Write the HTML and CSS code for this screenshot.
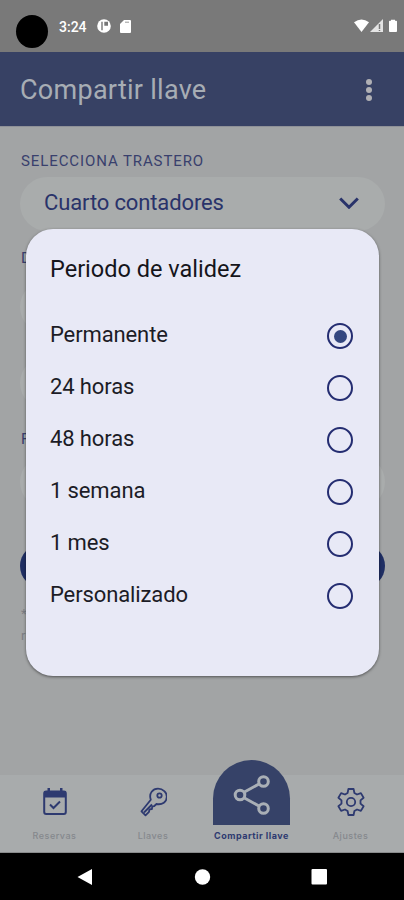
FILE: index.html
```html
<!DOCTYPE html>
<html lang="es">
<head>
<meta charset="utf-8">
<title>Compartir llave</title>
<link rel="stylesheet" href="styles.css">
</head>
<body>
<div class="phone">
  <div class="status">
    <span class="camera"></span>
    <span class="clock">3:24</span>
    <svg class="st-app" viewBox="0 0 14 14"><circle cx="7" cy="7" r="6.8" fill="#fff"/><path d="M5 2.8v8.5M8 3.500h2.300v2.500H8z" stroke="#777" stroke-width="1.400" fill="#777"/></svg>
    <svg class="st-sd" viewBox="0 0 11 13"><path d="M4 0h6a1 1 0 0 1 1 1v11a1 1 0 0 1-1 1H1a1 1 0 0 1-1-1V4z" fill="#fff"/><path d="M5 2.2h4" stroke="#999" stroke-width="1"/></svg>
    <span class="grow"></span>
    <svg class="st-right" viewBox="0 0 44 14"><path d="M0 3.3Q7.5-2.2 15 3.3L7.5 13z" fill="#fff"/><path d="M29 0v13H16z" fill="#e4e4e4"/><path d="M25.500 5v5M25.500 11v1" stroke="#777" stroke-width="1.500"/><path d="M37 .8h4v1h1.200q.8 0 .8.8V12q0 1-.8 1h-6.400q-.8 0-.8-1V2.600q0-.8.8-.8H37z" fill="#fff"/></svg>
  </div>
  <header class="bar">
    <h1>Compartir llave</h1>
    <div class="dots"><i></i><i></i><i></i></div>
  </header>
  <main class="content">
    <div class="label">SELECCIONA TRASTERO</div>
    <div class="field"><span>Cuarto contadores</span>
      <svg viewBox="0 0 20 12"><path d="M1.200 1.500L10 10.200 18.800 1.500" fill="none" stroke="#29336a" stroke-width="3"/></svg></div>
    <div class="label l2">D</div>
    <div class="field f2"></div>
    <div class="field f3"></div>
    <div class="label l3">F</div>
    <div class="field"></div>
    <div class="cta"></div>
    <p class="note">*<br>r</p>
  </main>
  <nav class="tabs">
    <div class="tab">
      <svg class="ico" viewBox="0 0 28 30"><rect x="3.200" y="4.500" width="21.600" height="22.500" rx="2" fill="none" stroke="#2e3a70" stroke-width="2"/><path d="M3 4h22v6.500H3zM6.500 1h2.500v4H6.500zM19 1h2.500v4H19z" fill="#2e3a70"/><path d="M9 17.500l3.500 3.500 6.500-6.500" fill="none" stroke="#2e3a70" stroke-width="2"/></svg>
      <span>Reservas</span>
    </div>
    <div class="tab">
      <svg class="ico" viewBox="0 0 28 30"><g fill="none" stroke="#2e3a70" stroke-width="1.800" stroke-linejoin="round"><path d="M11.800 12.800C9.500 6 14 1.700 19 1.700c5 0 8.800 3.600 8.800 8 0 5-4.500 8.500-10.300 7.300l-2.500 2.200-1.700.3-.4 2.500-2.400.3-.5 2.500-3.500 3.500-4-4z"/><circle cx="20.500" cy="8.500" r="2.200"/><path d="M5 25.500l8-8"/></g></svg>
      <span>Llaves</span>
    </div>
    <div class="tab active">
      <div class="dome"><svg viewBox="0 0 38 42"><g fill="none" stroke="#a9afb6" stroke-width="3"><path d="M11 18.300L26 10M11 23.700L26 32"/><circle cx="7" cy="21" r="4.800"/><circle cx="30.500" cy="7.500" r="4.800"/><circle cx="30.500" cy="34.500" r="4.800"/></g></svg></div>
      <span>Compartir llave</span>
    </div>
    <div class="tab">
      <svg class="ico" viewBox="0 0 28 30"><g fill="none" stroke="#2e3a70" stroke-width="1.800" stroke-linejoin="round"><path d="M11.400 2h5.200l.8 4 2.600 1.500 3.900-1.400 2.700 4.600-3.100 2.700v3.200l3.100 2.700-2.700 4.600-3.900-1.400-2.600 1.500-.8 4h-5.200l-.8-4L8 22.500l-3.900 1.400-2.700-4.600 3.100-2.700v-3.200l-3.100-2.700 2.700-4.600L8 7.500 10.600 6z"/><circle cx="14" cy="15" r="4.200"/></g></svg>
      <span>Ajustes</span>
    </div>
  </nav>
  <div class="system">
    <svg viewBox="0 0 404 47"><path d="M77.500 24L92 16v16z" fill="#fff"/><circle cx="202.500" cy="24" r="7.700" fill="#fff"/><rect x="311.500" y="16" width="15.500" height="15.500" rx="1" fill="#fff"/></svg>
  </div>
  <section class="dialog">
    <h2>Periodo de validez</h2>
    <div class="option"><span>Permanente</span><b class="radio on"></b></div>
    <div class="option"><span>24 horas</span><b class="radio"></b></div>
    <div class="option"><span>48 horas</span><b class="radio"></b></div>
    <div class="option"><span>1 semana</span><b class="radio"></b></div>
    <div class="option"><span>1 mes</span><b class="radio"></b></div>
    <div class="option"><span>Personalizado</span><b class="radio"></b></div>
  </section>
</div>
</body>
</html>
```
FILE: styles.css
```css
* { box-sizing: border-box; }
body { margin: 0; font-family: Roboto, "Liberation Sans", sans-serif; }
svg { display: block; }
h1, h2, p { margin: 0; font-weight: 400; }
.phone { position: relative; width: 404px; height: 900px; overflow: hidden; display: flex; flex-direction: column; background: #a2a4a5; }

.status { height: 52px; flex: none; background: #797979; display: flex; align-items: flex-start; padding-left: 16px; padding-right: 5px; }
.camera { width: 32px; height: 33px; margin-top: 15px; border-radius: 50%; background: #000; }
.clock { margin: 18px 0 0 11px; width: 28px; font-size: 14px; line-height: 18px; font-weight: 500; color: #fff; white-space: nowrap; }
.st-app { width: 14px; height: 14px; margin: 19px 0 0 10px; }
.st-sd { width: 11px; height: 13px; margin: 20px 0 0 9px; }
.st-right { width: 44px; height: 14px; margin: 19px 1px 0 0; }
.grow { flex: 1; }

.bar { height: 74px; flex: none; background: #374164; display: flex; align-items: center; justify-content: space-between; padding: 1px 32px 0 20px; }
.bar h1 { font-size: 27px; line-height: 32px; color: #a7adb4; letter-spacing: .27px; }
.dots { display: flex; flex-direction: column; gap: 2px; }
.dots i { width: 6px; height: 6px; border-radius: 50%; background: #b0b0b5; }

.content { flex: 1; min-height: 0; padding: 25px 19px 0 20px; border-top: 1px solid #8f9198; }
.label { height: 18px; padding-left: 1px; font-size: 15px; line-height: 18px; color: #39406d; letter-spacing: .9px; }
.field { height: 54px; margin-top: 7px; border-radius: 27px; background: #a9acac; display: flex; justify-content: space-between; align-items: center; padding: 0 26px 3px 24px; font-size: 22px; color: #29336a; letter-spacing: -.13px; }
.field svg { width: 20px; height: 12px; }
.l2 { margin-top: 18px; }
.f2 { margin: 13px 6px 0 0; }
.f3 { margin: 22px 6px 0 0; }
.l3 { margin-top: 20px; }
.cta { height: 44px; margin-top: 35px; border-radius: 22px; background: #1f2e63; }
.note { margin-top: 15px; padding-left: 1px; font-size: 13px; line-height: 22px; color: #7b7d83; }

.tabs { height: 78px; flex: none; background: #a8abac; border-bottom: 1px solid #898b8c; display: grid; grid-template-columns: 109px 88px 109px 89px; grid-template-rows: 77px; justify-content: start; }
.tab { min-height: 0; display: flex; flex-direction: column; align-items: center; justify-content: flex-end; padding-bottom: 11px; color: #85888d; white-space: nowrap; }
.tab span { font: 500 9px/11px Inter, sans-serif; letter-spacing: .5px; }
.ico { width: 28px; height: 30px; flex: none; margin-bottom: 13px; }
.active { color: #2e3a70; }
.active span { font-weight: 700; letter-spacing: .5px; }
.dome { width: 77px; height: 65px; flex: none; margin-bottom: 5px; border-radius: 38.500px 38.500px 0 0; background: #364268; display: flex; justify-content: center; padding-top: 14px; }
.dome svg { width: 38px; height: 42px; }
.system { height: 47px; flex: none; background: #000; }

.dialog { position: absolute; left: 26px; top: 229px; width: 353px; height: 447px; border-radius: 27px; background: #e8e9f6; box-shadow: 0 1px 3px rgba(0, 0, 0, .5); padding: 25px 26px 0 24px; color: #1c1c26; }
.dialog h2 { height: 56px; font-size: 23.500px; line-height: 30px; color: #15151b; }
.option { height: 52px; display: flex; align-items: center; justify-content: space-between; font-size: 22px; }
.option span { padding-bottom: 4px; letter-spacing: -.12px; }
.radio { width: 26px; height: 26px; border: 2px solid #242d71; border-radius: 50%; display: grid; place-items: center; }
.on::after { content: ""; width: 13px; height: 13px; border-radius: 50%; background: #34477f; }
```
